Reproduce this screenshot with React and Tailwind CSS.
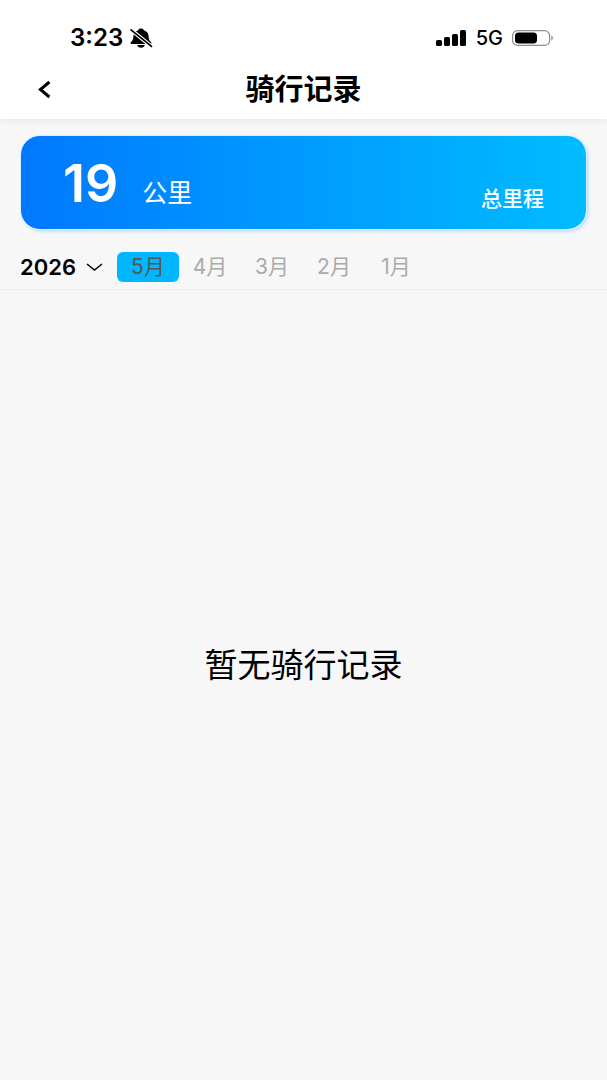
import { useState } from 'react'

const months = [5, 4, 3, 2, 1]
const years = [2026, 2025, 2024]

const StatusBar = () => (
    <div className="flex h-15 items-center justify-between pt-4 pr-13 pl-[70px]">
        <div className="flex items-center gap-1.5">
            <span className="text-[24px] leading-6 font-semibold">3:23</span>
            <svg className="h-5 w-6" viewBox="0 0 24 20" aria-hidden="true">
                <path d="M12 0.5C10.4 0.5 9.5 1.2 9.2 2.2C6 3.1 4.5 5.4 4.4 8.4C4.3 11.3 3.6 12.4 2 13.9C1.2 14.8 1.6 16 2.8 16H21.2C22.4 16 22.8 14.8 22 13.9C20.4 12.4 19.7 11.3 19.6 8.4C19.5 5.4 18 3.1 14.8 2.2C14.5 1.2 13.6 0.5 12 0.5Z" />
                <path d="M8.3 17H15.7C15.4 18.8 14 19.8 12 19.8C10 19.8 8.6 18.8 8.3 17Z" />
                <path d="M2 1.8L22.5 18.4" stroke="#fff" strokeWidth="3.8" />
                <path d="M2 1.8L22.5 18.4" stroke="#000" strokeWidth="1.7" strokeLinecap="round" />
            </svg>
        </div>
        <div className="flex items-center gap-2">
            <svg className="h-4 w-8" viewBox="0 0 32 16" aria-hidden="true">
                <rect x="0" y="10" width="6" height="6" rx="1.6" />
                <rect x="8" y="7" width="6" height="9" rx="1.6" />
                <rect x="16" y="4" width="6" height="12" rx="1.6" />
                <rect x="24" y="0" width="6" height="16" rx="1.6" />
            </svg>
            <span className="text-[20px] leading-6 font-medium">5G</span>
            <svg className="h-4 w-11" viewBox="0 0 44 16" aria-hidden="true">
                <rect x="1.6" y="0.6" width="37" height="14.8" rx="5" fill="none" stroke="#8e8e8e" strokeWidth="1.2" />
                <rect x="4" y="2.4" width="22" height="11.2" rx="3.6" />
                <path d="M40.3 5.6C42.4 6.3 42.4 9.7 40.3 10.4Z" fill="#8e8e8e" />
            </svg>
        </div>
    </div>
)

const App = () => {
    const [year, setYear] = useState(2026)
    const [month, setMonth] = useState(5)

    return (
        <div className="flex min-h-screen flex-col bg-[#f7f7f7] font-['Inter','Noto_Sans_CJK_SC',sans-serif] text-black">
            <header className="bg-white shadow-[0_1px_8px_rgba(0,0,0,0.08)]">
                <StatusBar />
                <div className="grid h-[59px] grid-cols-[1fr_auto_1fr] items-center px-8">
                    <button type="button" aria-label="返回" className="flex size-6 items-center justify-center">
                        <svg className="h-5 w-4" viewBox="0 0 16 20" fill="none" stroke="#000" strokeWidth="3" aria-hidden="true">
                            <path d="M13.4 2L4.4 9.5L13.4 17" />
                        </svg>
                    </button>
                    <h1 className="text-[29px] leading-8 font-bold">骑行记录</h1>
                </div>
            </header>

            <section className="mx-5 mt-4 flex h-[95px] items-end justify-between rounded-[20px] border border-[#d9f1ff] bg-linear-to-r from-[#0078ff] to-[#00bcff] bg-origin-border px-[42px] pb-5 text-white shadow-[2px_2px_3px_#c9e0ff]">
                <p className="flex items-baseline gap-6">
                    <span className="text-[52px] leading-12 font-semibold">19</span>
                    <span className="text-[25px] leading-8">公里</span>
                </p>
                <p className="text-[21px] leading-5 font-medium">总里程</p>
            </section>

            <nav className="flex h-[60px] items-center border-b border-[#ececec] px-5 pt-5 pb-1.5">
                <label className="relative mr-3 flex items-center">
                    <select
                        aria-label="年份"
                        value={year}
                        onChange={(e) => setYear(Number(e.target.value))}
                        className="w-[85px] appearance-none bg-transparent text-[22px] leading-7 font-semibold"
                    >
                        {years.map((item) => (
                            <option key={item} value={item}>{item}</option>
                        ))}
                    </select>
                    <svg className="pointer-events-none absolute right-0 h-3 w-5" viewBox="0 0 20 12" fill="none" stroke="#000" strokeWidth="1.5" aria-hidden="true">
                        <path d="M2 3L9.5 9L17 3" />
                    </svg>
                </label>
                {months.map((item) => (
                    <button
                        key={item}
                        type="button"
                        onClick={() => setMonth(item)}
                        className={`h-[30px] w-[62px] rounded-md text-[21px] leading-7 ${item === month ? 'bg-[#00b7ff] text-[#555]' : 'text-[#aaa]'}`}
                    >
                        {item}月
                    </button>
                ))}
            </nav>

            <main className="flex flex-1 items-center justify-center pb-10">
                <p className="text-[33px] leading-10">暂无骑行记录</p>
            </main>
        </div>
    )
}

export default App
